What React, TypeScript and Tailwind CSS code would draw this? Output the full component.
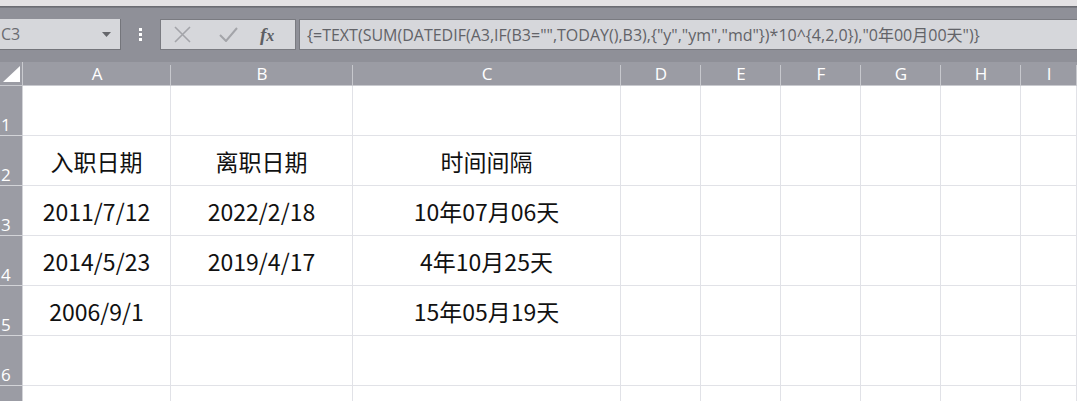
import React from 'react';

const cols = ['A', 'B', 'C', 'D', 'E', 'F', 'G', 'H', 'I'];

// rows of data, by column A..C
const rows: string[][] = [
  ['', '', ''],
  ['入职日期', '离职日期', '时间间隔'],
  ['2011/7/12', '2022/2/18', '10年07月06天'],
  ['2014/5/23', '2019/4/17', '4年10月25天'],
  ['2006/9/1', '', '15年05月19天'],
  ['', '', ''],
  ['', '', ''],
];

const gridCols = 'grid grid-cols-[23px_148px_182px_268px_80px_80px_80px_80px_80px_1fr]';
const formula = '{=TEXT(SUM(DATEDIF(A3,IF(B3="",TODAY(),B3),{"y","ym","md"})*10^{4,2,0}),"0年00月00天")}';

const App: React.FC = () => {
  return (
    <div className="w-[1077px] h-[401px] overflow-hidden bg-white font-['Noto_Sans_CJK_SC',sans-serif]">
      {/* window top edge */}
      <div className="h-[6px] bg-[#e4e2e4]" />
      <div className="h-[2px] bg-gradient-to-b from-[#65666c] to-[#7f8087]" />

      {/* formula toolbar */}
      <div className="h-[54px] bg-[#8f9098] pt-[11px] flex items-start">
        <div className="w-[121px] h-[31px] bg-[#d6d7db] border-r border-b border-[#74757b] flex items-center justify-between pl-[1px] pr-[9px]">
          <span className="text-[16px] text-[#6b6c71] font-['Open_Sans',sans-serif]">C3</span>
          <svg width="9" height="5" viewBox="0 0 9 5">
            <path d="M0 0 L9 0 L4.5 5 Z" fill="#65666b" />
          </svg>
        </div>
        <div className="w-[39px] h-[31px] flex flex-col items-center justify-center gap-[2px]">
          <div className="w-[3px] h-[3px] bg-white" />
          <div className="w-[3px] h-[3px] bg-white" />
          <div className="w-[3px] h-[3px] bg-white" />
        </div>
        <div className="w-[136px] h-[31px] bg-[#d6d7db] border border-[#7a7b81] flex items-center">
          <svg className="ml-[13px]" width="17" height="17" viewBox="0 0 17 17">
            <path d="M1 1 L16 16 M16 1 L1 16" stroke="#a3a4a9" strokeWidth="1.6" fill="none" />
          </svg>
          <svg className="ml-[28px]" width="19" height="15" viewBox="0 0 19 15">
            <path d="M1 8 L7 14 L18 1" stroke="#a3a4a9" strokeWidth="2" fill="none" />
          </svg>
          <span className="ml-[22px] text-[19px] italic font-bold text-[#5e5f64] font-['Liberation_Serif',serif] leading-none">
            f<span className="text-[16px]">x</span>
          </span>
        </div>
        <div className="ml-[3px] flex-1 h-[31px] bg-[#d6d7db] border-t border-b border-l border-[#7a7b81] flex items-center pl-[7px]">
          <span className="text-[16px] text-[#626368] whitespace-nowrap font-['Open_Sans','Noto_Sans_CJK_SC',sans-serif]">
            {formula}
          </span>
        </div>
      </div>

      {/* column headers */}
      <div className={`${gridCols} h-[24px] bg-[#9b9ca4]`}>
        <div className="border-r border-b border-[#c9cacf] relative">
          <svg className="absolute right-[2px] bottom-[3px]" width="17" height="16" viewBox="0 0 17 16">
            <path d="M17 0 L17 16 L0 16 Z" fill="#ffffff" />
          </svg>
        </div>
        {cols.map((c) => (
          <div
            key={c}
            className="border-b border-[#c9cacf] flex items-end justify-center pb-[1px] text-[17px] leading-none text-white font-['Open_Sans',sans-serif] relative"
          >
            <span className="pb-[2px]">{c}</span>
            <div className="absolute right-0 top-[3px] bottom-0 w-px bg-[#c7c8cd]" />
          </div>
        ))}
      </div>

      {/* sheet rows */}
      {rows.map((r, i) => (
        <div key={i} className={`${gridCols} h-[50px]`}>
          <div className="bg-[#9b9ca4] border-r border-b border-[#d3d4d8] flex items-end pl-[1px] pb-[2px] text-[17px] leading-none text-white font-['Open_Sans',sans-serif]">
            {i < 6 ? i + 1 : ''}
          </div>
          {cols.map((c, j) => (
            <div
              key={c}
              className="border-r border-b border-[#e1e2e7] flex items-center justify-center pt-[1px] text-[23px] text-[#111111] whitespace-nowrap"
            >
              {j < 3 ? r[j] : ''}
            </div>
          ))}
        </div>
      ))}
    </div>
  );
};

export default App;
